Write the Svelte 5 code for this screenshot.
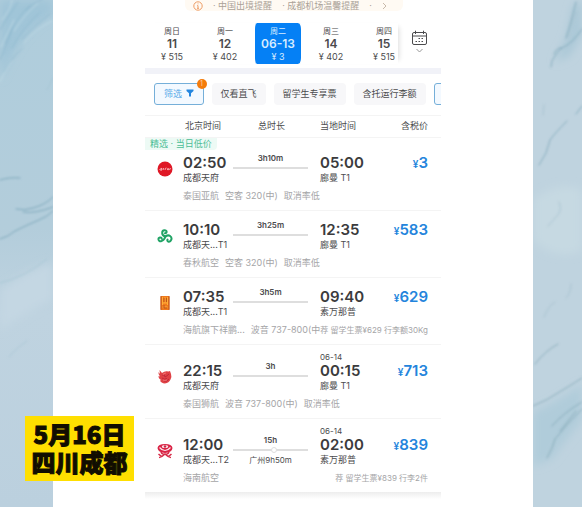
<script lang="ts">
    type Flight = {
        logo: string;
        airline: string;
        depart: string;
        from: string;
        arrive: string;
        to: string;
        nextDay?: string;
        duration: string;
        stop?: string;
        price: number;
        meta: string[];
        offer?: string;
    };

    const days = [
        { week: "周日", date: "11", price: 515 },
        { week: "周一", date: "12", price: 402 },
        { week: "周二", date: "06-13", price: 3 },
        { week: "周三", date: "14", price: 402 },
        { week: "周四", date: "15", price: 515 },
    ];

    const filters = ["仅看直飞", "留学生专享票", "含托运行李额"];

    const flights: Flight[] = [
        { logo: "airasia", airline: "泰国亚航", depart: "02:50", from: "成都天府", arrive: "05:00", to: "廊曼 T1", duration: "3h10m", price: 3, meta: ["泰国亚航", "空客 320(中)", "取消率低"] },
        { logo: "spring", airline: "春秋航空", depart: "10:10", from: "成都天...T1", arrive: "12:35", to: "廊曼 T1", duration: "3h25m", price: 583, meta: ["春秋航空", "空客 320(中)", "取消率低"] },
        { logo: "lucky", airline: "祥鹏航空", depart: "07:35", from: "成都天...T1", arrive: "09:40", to: "素万那普", duration: "3h5m", price: 629, meta: ["海航旗下祥鹏...", "波音 737-800(中"], offer: "荐 留学生票¥629 行李额30Kg" },
        { logo: "lion", airline: "泰国狮航", depart: "22:15", from: "成都天府", arrive: "00:15", to: "廊曼 T1", nextDay: "06-14", duration: "3h", price: 713, meta: ["泰国狮航", "波音 737-800(中)", "取消率低"] },
        { logo: "hainan", airline: "海南航空", depart: "12:00", from: "成都天...T2", arrive: "02:00", to: "素万那普", nextDay: "06-14", duration: "15h", stop: "广州9h50m", price: 839, meta: ["海南航空"], offer: "荐 留学生票¥839 行李2件" },
    ];

    let selected = $state(2);
</script>

<div class="page">
    <svg class="marble" viewBox="0 0 53 507" preserveAspectRatio="xMidYMin slice" aria-hidden="true">
        <defs>
            <linearGradient id="ice" x1="0" y1="0" x2="0" y2="1">
                <stop offset="0" stop-color="#afcddc" />
                <stop offset="0.45" stop-color="#b3cddb" />
                <stop offset="0.62" stop-color="#bfd3e0" />
                <stop offset="1" stop-color="#bbd0de" />
            </linearGradient>
            <filter id="soft" x="-20%" y="-20%" width="140%" height="140%"><feGaussianBlur stdDeviation="0.8" /></filter>
            <filter id="haze" x="-50%" y="-20%" width="200%" height="140%"><feGaussianBlur stdDeviation="4" /></filter>
        </defs>
        <rect width="53" height="507" fill="url(#ice)" />
        <g filter="url(#haze)">
            <path d="M0 0H53V14Q30 26 18 46Q8 62 0 80Z" fill="#a0c5d8" />
            <path d="M0 290Q28 270 53 262V300Q28 310 0 330Z" fill="#c4d7e3" />
        </g>
        <g filter="url(#soft)" fill="none" stroke-linecap="round">
            <path d="M0 30Q9 15 18 2M5 43Q15 19 30 5M12 48Q22 29 39 13M22 39Q35 25 50 14M0 60Q9 40 13 27M4 72Q11 58 22 49M26 10Q35 2 43-1" stroke="#86b3ca" opacity="0.6" />
            <path d="M2 20Q11 9 12 0M14 31Q24 15 38 3M24 43Q35 29 52 21M0 82Q7 67 12 61M1 47Q9 30 14 20" stroke="#c8dfe9" opacity="0.7" />
            <path d="M0 180Q9 177 20 178M16 209Q25 211 33 208Q45 205 53 197M23 212Q35 214 53 207M0 239Q8 237 15 231Q29 224 39 220Q47 217 53 211" stroke="#6f9db1" opacity="0.8" />
            <path d="M0 283Q25 277 47 259M9 357Q15 349 27 341M47 90L53 78" stroke="#9ebfce" opacity="0.6" />
        </g>
    </svg>

    <main>
        <section class="app">
            <a class="notice" href="#notice">
                <svg viewBox="0 0 10 10" width="10" height="10" aria-hidden="true">
                    <circle cx="5" cy="5" r="4.2" fill="none" stroke="#ed9d66" />
                    <path d="M5 2.5V3.3M4.2 4.6H5V7.3M4 7.3H6" fill="none" stroke="#ed9d66" />
                </svg>
                <span>· 中国出境提醒</span>
                <span>· 成都机场温馨提醒</span>
                <span>·</span>
                <svg viewBox="0 0 5 8" width="5" height="8" aria-hidden="true"><path d="M1 1L4 4L1 7" fill="none" stroke="#c8b9aa" /></svg>
            </a>

            <nav class="calendar">
                <div class="days">
                    {#each days as day, index}
                        <button class="day" class:selected={selected === index} onclick={() => selected = index}>
                            <span class="week">{day.week}</span>
                            <span class="date">{day.date}</span>
                            <span class="fare">¥ {day.price}</span>
                        </button>
                    {/each}
                </div>
                <button class="open" aria-label="日历">
                    <svg viewBox="0 0 18 24" width="18" height="24" fill="none" stroke="#4b4b4d">
                        <rect x="1.5" y="2.5" width="14" height="12" rx="1.5" />
                        <path d="M1.5 6H15.5M4.5 0.7V4M12.5 0.7V4" />
                        <path d="M7.5 8.5H9M10.5 8.5H12M4.5 11.5H6M7.5 11.5H9M10.5 11.5H12" />
                        <path d="M5.5 19L8.5 22L11.5 19" stroke="#999" />
                    </svg>
                </button>
            </nav>

            <div class="filters">
                <button class="filter active">
                    筛选
                    <svg viewBox="0 0 8 8" width="8" height="8" aria-hidden="true"><path d="M0.5 0.5H7.5V2L5 4.3V7.5H3V4.3L0.5 2Z" fill="#2386df" /></svg>
                    <span class="count">1</span>
                </button>
                {#each filters as filter}
                    <button class="filter">{filter}</button>
                {/each}
                <button class="filter active more" aria-label="更多"></button>
            </div>

            <div class="heading">
                <span>北京时间</span>
                <span class="total">总时长</span>
                <span>当地时间</span>
                <span class="tax">含税价</span>
            </div>

            {#each flights as flight, index}
                <article class="flight" class:first={index === 0} class:overnight={flight.nextDay}>
                    {#if index === 0}
                        <span class="tag">精选 · 当日低价</span>
                    {/if}
                    <svg class="logo" viewBox="0 0 16 16" role="img" aria-label={flight.airline}>
                        {#if flight.logo === "airasia"}
                            <circle cx="8" cy="8" r="7.5" fill="#df1826" />
                            <path d="M2.5 9Q4 6.5 5 7.5L4.6 9.2M6 9L6.8 7M8 9L8.5 7.3L9.5 7M10.5 9Q10.2 6.8 11.6 7.6L11.2 9.2M12.5 9L13.5 7M3 9H5" fill="none" stroke="#f9bcc0" stroke-width="0.9" />
                        {:else if flight.logo === "spring"}
                            <g fill="none" stroke="#20a365" stroke-width="2" stroke-linecap="round">
                                <path d="M8.5 8.5C4 7.5 4.5 2.5 7.5 2.3C10.5 2.2 10 5.2 8 5.2" />
                                <path d="M8.5 8.5C6.5 13.8 2 14.5 1.5 11.5C1.2 9.2 4.4 8.6 4.8 10.8" />
                                <path d="M8.5 8.5C12 5.8 15.3 8.8 14.3 11.7C13.2 14.8 9.5 13.8 10.5 11.6" />
                            </g>
                        {:else if flight.logo === "lucky"}
                            <rect x="3.5" y="1" width="9" height="14" rx="1" fill="#f07a1c" />
                            <path d="M5.5 2V10M8 2V8M10.5 2V10M5 8H11M5.5 12H10.5" fill="none" stroke="#ffae38" />
                            <path d="M4 1V15M12 1V15M7 3V7M9.5 3V7M7 10V13H10" fill="none" stroke="#b04a1d" stroke-width="0.8" />
                        {:else if flight.logo === "lion"}
                            <path d="M1.5 3L3 5L2.5 1L5 4Q8 1.5 11.5 2.5L13 2L14 5Q15 8 13.5 10.5Q12 14 8 14.5Q4 14 3 11.5L4.5 11Q1.5 10 1.5 7L3 7.5Q1 5.500 1.5 3Z" fill="#df4145" />
                            <path d="M5 6Q8 5 8 8Q10 7 12 5M5 9Q7 11 10 9.500M7 12Q10 13 12 10" fill="none" stroke="#b82336" stroke-width="0.8" />
                            <path d="M9 4Q6 4 6 6M6 11Q8 12 10 11" fill="none" stroke="#ff9690" stroke-width="0.6" />
                        {:else}
                            <path d="M0.5 5Q1 1 8 1Q15 1 15.5 5Q15 9.500 8 10Q1 9.500 0.5 5Z" fill="#da2345" />
                            <path d="M2.500 4.500Q5 7.500 8 7.500Q11 7.500 13.500 4.500" fill="none" stroke="#fbe8ec" stroke-width="1.200" />
                            <ellipse cx="8" cy="3.5" rx="3.200" ry="1.600" fill="#fbe8ec" />
                            <circle cx="8" cy="3.5" r="1.200" fill="#c52843" />
                            <path d="M4 9Q5 12 8 11Q11 12 12 9M2 14.5Q5 14 8 11Q11 14 14 14.5M1.5 11L4.500 13.500M14.5 11L11.500 13.500" fill="none" stroke="#d72d49" stroke-width="1.6" />
                        {/if}
                    </svg>
                    <div class="info">
                        <div class="route">
                            <div class="place">
                                <strong>{flight.depart}</strong>
                                <span>{flight.from}</span>
                            </div>
                            <div class="journey">
                                <span class="duration">{flight.duration}</span>
                                <span class="line" class:transfer={flight.stop}></span>
                                {#if flight.stop}
                                    <span class="stop">{flight.stop}</span>
                                {/if}
                            </div>
                            <div class="place">
                                {#if flight.nextDay}
                                    <span class="next">{flight.nextDay}</span>
                                {/if}
                                <strong>{flight.arrive}</strong>
                                <span>{flight.to}</span>
                            </div>
                            <div class="price"><small>¥</small>{flight.price}</div>
                        </div>
                        <div class="meta">
                            <div class="facts">
                                {#each flight.meta as fact}
                                    <span>{fact}</span>
                                {/each}
                            </div>
                            {#if flight.offer}
                                <span class="offer">{flight.offer}</span>
                            {/if}
                        </div>
                    </div>
                </article>
            {/each}
            <div class="end"></div>
        </section>
    </main>

    <svg class="marble" viewBox="0 0 49 507" preserveAspectRatio="xMidYMin slice" aria-hidden="true">
        <rect width="49" height="507" fill="#bfd3df" />
        <g filter="url(#haze)">
            <path d="M49 0L40 6L34 37L22 62L36 56L49 34Z" fill="#aac8d7" />
            <path d="M49 384Q24 402 0 412V466L19 459Q31 442 49 420Z" fill="#b0ccda" />
            <path d="M0 200Q26 180 49 190V250Q24 262 0 240Z" fill="#c6d9e2" />
        </g>
        <g filter="url(#soft)" fill="none" stroke-linecap="round">
            <path d="M18 67Q18 60 22 56Q27 49 29 48Q24 47 21 54M29 48Q40 43 49 29M33 38Q38 23 43 2M34 121Q22 133 17 140L13 153L6 165M49 106L43 114" stroke="#709eb0" opacity="0.7" />
            <path d="M0 406Q15 400 28 391Q35 387 49 378M19 426Q29 414 49 402M14 458L19 448L22 439Q34 424 49 409M27 431L43 411M2 364Q12 351 25 344" stroke="#789fae" opacity="0.7" />
            <path d="M10 115L11 105M15 226L23 217Q30 211 26 202M33 298Q38 293 38 284M11 317Q16 305 22 302M43 12Q37 28 35 37" stroke="#9dbbc9" opacity="0.6" />
        </g>
    </svg>

    <div class="caption">
        <span>5月16日</span>
        <span>四川成都</span>
    </div>
</div>

<style>
:global(body) {
    margin: 0;
    background: #fff;
}
.page {
    position: relative;
    display: grid;
    grid-template-columns: 53px 1fr 49px;
    min-height: 100vh;
    overflow: hidden;
    font-family: Inter, "Noto Sans CJK SC", sans-serif;
    font-size: 9px;
    line-height: 12px;
    color: #4b4b4d;
}
.marble {
    width: 100%;
    height: 100%;
}
main {
    padding: 0 92px;
    min-width: 0;
}
button {
    font: inherit;
    color: inherit;
    border: 0;
    padding: 0;
    background: none;
    white-space: nowrap;
}
.notice {
    display: flex;
    align-items: center;
    gap: 10px;
    height: 11px;
    margin: 0 38px 0 40px;
    padding: 0 8px;
    overflow: hidden;
    border-radius: 0 0 6px 6px;
    background: #fffaf3;
    color: #aaa197;
    text-decoration: none;
    white-space: nowrap;
}
.calendar {
    display: flex;
    padding: 12px 0 4px;
    border-bottom: 6px solid #f1f2f8;
}
.days {
    display: flex;
    flex: 1;
    min-width: 0;
    overflow: hidden;
    box-shadow: 5px 0 5px -4px #dcdcdc;
}
.day {
    display: flex;
    flex: 0 0 53px;
    flex-direction: column;
    align-items: center;
    justify-content: center;
    box-sizing: border-box;
    height: 41px;
    border: solid #fff;
    border-width: 0 3px 0 4px;
    border-radius: 6px;
}
.day.selected {
    background: #0580f5;
    color: #d8ecff;
}
.week {
    font-size: 8px;
}
.date {
    font-size: 12px;
    line-height: 14px;
    font-weight: 600;
}
.open {
    flex: 0 0 43px;
}
.filters {
    display: flex;
    gap: 8px;
    padding: 9px 0 10px 9px;
    overflow: hidden;
    border-bottom: 1px solid #f4f4f4;
}
.filter {
    position: relative;
    flex: none;
    box-sizing: border-box;
    height: 22px;
    padding: 0 9px;
    border-radius: 4px;
    background: #f7f7f9;
}
.filter.active {
    border: 1px solid #75afd9;
    border-radius: 3px;
    background: #f3f9ff;
    color: #58a9e8;
}
.filter svg {
    margin-left: 1px;
}
.count {
    position: absolute;
    top: -5px;
    right: -4px;
    width: 10px;
    height: 10px;
    border-radius: 50%;
    background: #f47c0c;
    color: #ffd2a5;
    font-size: 7px;
    line-height: 10px;
}
.heading {
    display: grid;
    grid-template-columns: 50px 1fr 62px 46px;
    padding: 4px 13px 5px 40px;
}
.total {
    padding-left: 23px;
}
.tax {
    text-align: right;
}
.flight {
    position: relative;
    display: flex;
    gap: 10px;
    padding: 8px 13px 8px 12px;
    border-top: 1px solid #f4f4f4;
}
.flight.first {
    padding-top: 14px;
}
.flight.overnight {
    padding-top: 7px;
}
.tag {
    position: absolute;
    top: 0;
    left: 0;
    padding: 0 5px;
    border-radius: 0 0 4px 0;
    background: #edfaf5;
    color: #4bbd96;
}
.logo {
    flex: none;
    width: 16px;
    height: 16px;
    margin-top: 9px;
}
.flight.overnight .logo {
    margin-top: 17px;
}
.info {
    flex: 1;
    min-width: 0;
}
.route {
    display: grid;
    grid-template-columns: 50px 1fr 62px 46px;
    align-items: end;
}
.place {
    display: flex;
    flex-direction: column;
    white-space: nowrap;
}
.place strong {
    font-size: 15px;
    line-height: 18px;
    font-weight: 600;
    color: #3b3b3d;
}
.next {
    font-size: 8px;
    line-height: 10px;
}
.journey {
    display: grid;
    grid-template-rows: 12px 4px 12px;
    row-gap: 2px;
    align-self: end;
    margin-right: 12px;
    text-align: center;
}
.duration {
    font-size: 8px;
    font-weight: 600;
}
.line {
    position: relative;
    align-self: center;
    height: 2px;
    background: #dedede;
}
.transfer::after {
    content: "";
    position: absolute;
    top: -2px;
    left: 50%;
    width: 4px;
    height: 4px;
    border: 1px solid #dedede;
    border-radius: 50%;
    background: #fff;
}
.stop {
    font-size: 8px;
    white-space: nowrap;
}
.price {
    padding-bottom: 11px;
    font-size: 15px;
    line-height: 18px;
    font-weight: 600;
    color: #2384dc;
    text-align: right;
}
.price small {
    font-size: 10px;
}
.meta {
    display: flex;
    justify-content: space-between;
    margin-top: 6px;
    color: #a5a5a7;
    white-space: nowrap;
}
.facts {
    display: flex;
    gap: 6px;
    min-width: 0;
}
.offer {
    flex: none;
    font-size: 8px;
}
.end {
    height: 7px;
    background: linear-gradient(#ededed, #fff);
}
.caption {
    position: absolute;
    top: 416px;
    left: 25px;
    display: flex;
    flex-direction: column;
    align-items: center;
    box-sizing: border-box;
    width: 109px;
    padding: 4px 0 5px;
    background: #ffdf00;
    color: #110d00;
    font-family: "Noto Sans CJK SC", sans-serif;
    font-size: 24px;
    line-height: 28px;
    font-weight: 900;
    -webkit-text-stroke: 1px #110d00;
}
</style>
